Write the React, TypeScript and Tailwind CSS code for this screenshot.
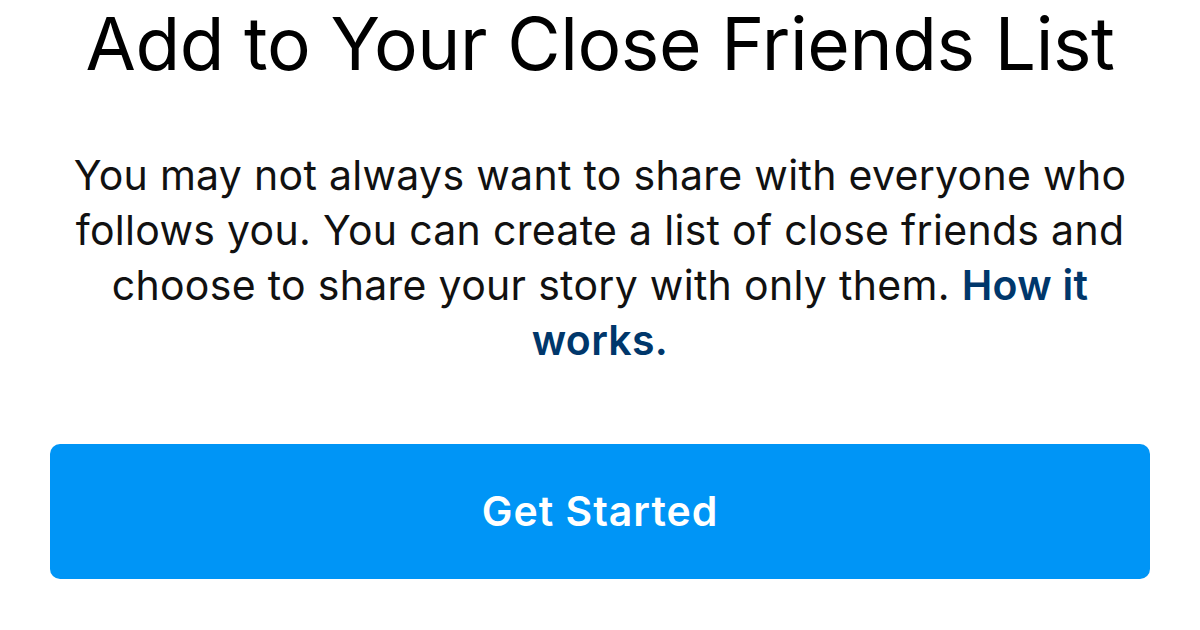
export default function App() {
  return (
    <div className="w-[1200px] h-[630px] bg-white overflow-hidden flex flex-col items-center font-['Inter','Liberation_Sans',sans-serif]">
      <h1 className="text-[73px] leading-[88px] font-normal text-black tracking-[-0.4px]">
        Add to Your Close Friends List
      </h1>
      <p className="mt-[60px] w-[1100px] text-center text-[41px] leading-[55px] text-[#111] tracking-[0.3px]">
        You may not always want to share with everyone who
        <br />
        follows you. You can create a list of close friends and
        <br />
        choose to share your story with only them.{' '}
        <a href="#" className="font-semibold text-[#00376b]">
          How it
          <br />
          works.
        </a>
      </p>
      <button className="mt-[76px] w-[1100px] h-[135px] shrink-0 rounded-[10px] bg-[#0095f6] text-white text-[41px] font-semibold tracking-[1px]">
        Get Started
      </button>
    </div>
  );
}
